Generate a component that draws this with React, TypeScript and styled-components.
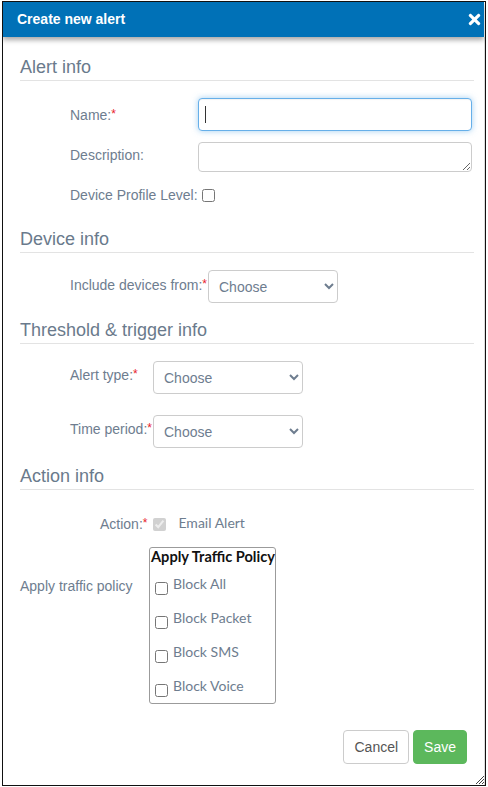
import React from "react";
import styled, { createGlobalStyle } from "styled-components";
import { FaTimes } from "react-icons/fa";

const GlobalStyle = createGlobalStyle`
    html, body {
        margin: 0;
        padding: 0;
        background: #fff;
    }
    body {
        font-family: "Liberation Sans", Arial, sans-serif;
        font-size: 14px;
    }
`;

const Frame = styled.div`
    position: relative;
    box-sizing: border-box;
    margin: 1px 0 0 2px;
    width: 484px;
    height: 785px;
    border: 1px solid #111;
    background: #fff;
    overflow: hidden;
`;

const Header = styled.div`
    position: relative;
    z-index: 1;
    display: flex;
    align-items: center;
    justify-content: space-between;
    height: 35px;
    margin-right: 1px;
    padding: 0 0 0 14px;
    background: #0071b7;
    box-shadow: 0 3px 5px rgba(0, 0, 0, 0.35);
    color: #fff;
`;

const Title = styled.span`
    font-weight: bold;
    font-size: 14px;
    margin-top: -1px;
`;

const Close = styled.button`
    display: flex;
    align-items: center;
    justify-content: center;
    width: 20px;
    height: 20px;
    padding: 0;
    border: 0;
    background: none;
    color: #fff;
    font-size: 17px;
    margin-top: -1px;
`;

const Body = styled.div`
    display: flex;
    flex-direction: column;
    border-right: 1px solid #ddd;
    height: calc(100% - 35px);
    box-sizing: border-box;
    padding: 0 10px 0 17px;
`;

const SectionTitle = styled.h3<{ $top: number }>`
    margin: ${(p) => p.$top}px 0 0;
    padding-bottom: 3px;
    border-bottom: 1px solid #e3e3e3;
    font-size: 18px;
    line-height: 20px;
    font-weight: normal;
    color: #6a7a8c;
`;

const Row = styled.div<{ $top: number; $labelWidth: number; $align?: string }>`
    display: grid;
    grid-template-columns: ${(p) => p.$labelWidth}px auto;
    align-items: ${(p) => p.$align || "center"};
    margin-top: ${(p) => p.$top}px;
    padding-left: 50px;
`;

const Label = styled.label<{ $pad?: number }>`
    color: #6e7d8f;
    font-size: 14px;
    line-height: 20px;
    white-space: nowrap;
    padding-top: ${(p) => p.$pad || 0}px;
`;

const Req = styled.span`
    color: #e8222c;
    vertical-align: top;
    font-size: 12px;
    position: relative;
    top: -1px;
`;

const InputWrap = styled.div`
    position: relative;

    &::after {
        content: "";
        position: absolute;
        left: 7px;
        top: 8px;
        width: 1px;
        height: 17px;
        background: #333;
    }
`;

const TextInput = styled.input`
    box-sizing: border-box;
    width: 274px;
    height: 33px;
    padding: 6px 10px;
    border: 1px solid #66afe9;
    border-radius: 4px;
    box-shadow: inset 0 1px 1px rgba(0, 0, 0, 0.05), 0 0 6px rgba(102, 175, 233, 0.6);
    outline: none;
    font: 14px "Liberation Sans", Arial, sans-serif;
`;

const TextArea = styled.textarea`
    box-sizing: border-box;
    display: block;
    width: 274px;
    height: 30px;
    padding: 4px 10px;
    border: 1px solid #ccc;
    border-radius: 4px;
    font: 14px "Liberation Sans", Arial, sans-serif;
    outline: none;
`;

const Check = styled.input<{ $gap?: number }>`
    width: 13px;
    height: 13px;
    margin: 0 0 0 ${(p) => p.$gap ?? 4}px;
`;

const Select = styled.select<{ $width: number }>`
    box-sizing: border-box;
    width: ${(p) => p.$width}px;
    height: 33px;
    padding: 4px 6px 4px 6px;
    border: 1px solid #ccc;
    border-radius: 4px;
    background: #fff;
    color: #6e7d8f;
    font: 14px "Liberation Sans", Arial, sans-serif;
    outline: none;
`;

const ActionRow = styled.div`
    display: flex;
    align-items: center;
    margin-top: 24px;
    padding-left: 80px;
    height: 20px;
`;

const EmailLabel = styled.span`
    margin-left: 12px;
    margin-top: -3px;
    color: #6e7d8f;
    font-family: Lato, sans-serif;
    font-size: 14px;
`;

const PolicyRow = styled.div`
    display: grid;
    grid-template-columns: 129px auto;
    margin-top: 13px;
`;

const PolicyLabel = styled.span`
    padding-top: 29px;
    color: #6e7d8f;
    font-size: 14px;
    line-height: 20px;
`;

const PolicyBox = styled.div`
    box-sizing: border-box;
    width: 127px;
    height: 157px;
    border: 1px solid #9b9b9b;
    border-radius: 3px;
    padding: 0 0 0 5px;
`;

const PolicyTitle = styled.div`
    margin-left: -4px;
    font-family: Lato, sans-serif;
    font-weight: bold;
    font-size: 14.6px;
    line-height: 18px;
    color: #111;
    white-space: nowrap;
`;

const PolicyItem = styled.label<{ $first?: boolean }>`
    display: flex;
    align-items: flex-start;
    height: 34px;
    margin-top: ${(p) => (p.$first ? "9px" : "0")};

    input {
        width: 13px;
        height: 13px;
        margin: 7px 5px 0 0;
    }

    span {
        color: #6e7d8f;
        font-family: Lato, sans-serif;
        font-size: 14px;
        line-height: 18px;
    }
`;

const Footer = styled.div`
    display: flex;
    justify-content: flex-end;
    gap: 4px;
    margin-top: 26px;
    padding-right: 7px;
`;

const Button = styled.button<{ $primary?: boolean }>`
    height: 34px;
    padding: 0 10px;
    border-radius: 4px;
    border: 1px solid ${(p) => (p.$primary ? "#5cb85c" : "#ccc")};
    background: ${(p) => (p.$primary ? "#5cb85c" : "#fff")};
    color: ${(p) => (p.$primary ? "#fff" : "#555")};
    font: 14px "Liberation Sans", Arial, sans-serif;
`;

const Grip = styled.svg`
    position: absolute;
    right: 1px;
    bottom: 1px;
`;

const policies = ["Block All", "Block Packet", "Block SMS", "Block Voice"];

export default function App() {
    return <>
        <GlobalStyle />
        <Frame>
            <Header>
                <Title>Create new alert</Title>
                <Close><FaTimes /></Close>
            </Header>
            <Body>
                <SectionTitle $top={20}>Alert info</SectionTitle>
                <Row $top={17} $labelWidth={128}>
                    <Label>Name:<Req>*</Req></Label>
                    <InputWrap><TextInput type="text" /></InputWrap>
                </Row>
                <Row $top={11} $labelWidth={128} $align="start">
                    <Label $pad={3}>Description:</Label>
                    <TextArea />
                </Row>
                <Row $top={13} $labelWidth={128}>
                    <Label>Device Profile Level:</Label>
                    <Check type="checkbox" />
                </Row>

                <SectionTitle $top={24}>Device info</SectionTitle>
                <Row $top={17} $labelWidth={138} $align="start">
                    <Label $pad={5}>Include devices from:<Req>*</Req></Label>
                    <Select $width={130}><option>Choose</option></Select>
                </Row>

                <SectionTitle $top={17}>Threshold &amp; trigger info</SectionTitle>
                <Row $top={17} $labelWidth={83} $align="start">
                    <Label $pad={4}>Alert type:<Req>*</Req></Label>
                    <Select $width={150}><option>Choose</option></Select>
                </Row>
                <Row $top={21} $labelWidth={83} $align="start">
                    <Label $pad={4}>Time period:<Req>*</Req></Label>
                    <Select $width={150}><option>Choose</option></Select>
                </Row>

                <SectionTitle $top={18}>Action info</SectionTitle>
                <ActionRow>
                    <Label>Action:<Req>*</Req></Label>
                    <Check type="checkbox" $gap={6} checked disabled readOnly />
                    <EmailLabel>Email Alert</EmailLabel>
                </ActionRow>

                <PolicyRow>
                    <PolicyLabel>Apply traffic policy</PolicyLabel>
                    <PolicyBox>
                        <PolicyTitle>Apply Traffic Policy</PolicyTitle>
                        {policies.map((p, i) => (
                            <PolicyItem key={p} $first={i === 0}>
                                <input type="checkbox" />
                                <span>{p}</span>
                            </PolicyItem>
                        ))}
                    </PolicyBox>
                </PolicyRow>

                <Footer>
                    <Button>Cancel</Button>
                    <Button $primary>Save</Button>
                </Footer>
            </Body>
            <Grip width="9" height="9" viewBox="0 0 9 9">
                <path d="M1 9 L9 1 M4 9 L9 4 M7 9 L9 7" stroke="#444" strokeWidth="1" />
            </Grip>
        </Frame>
    </>;
}
